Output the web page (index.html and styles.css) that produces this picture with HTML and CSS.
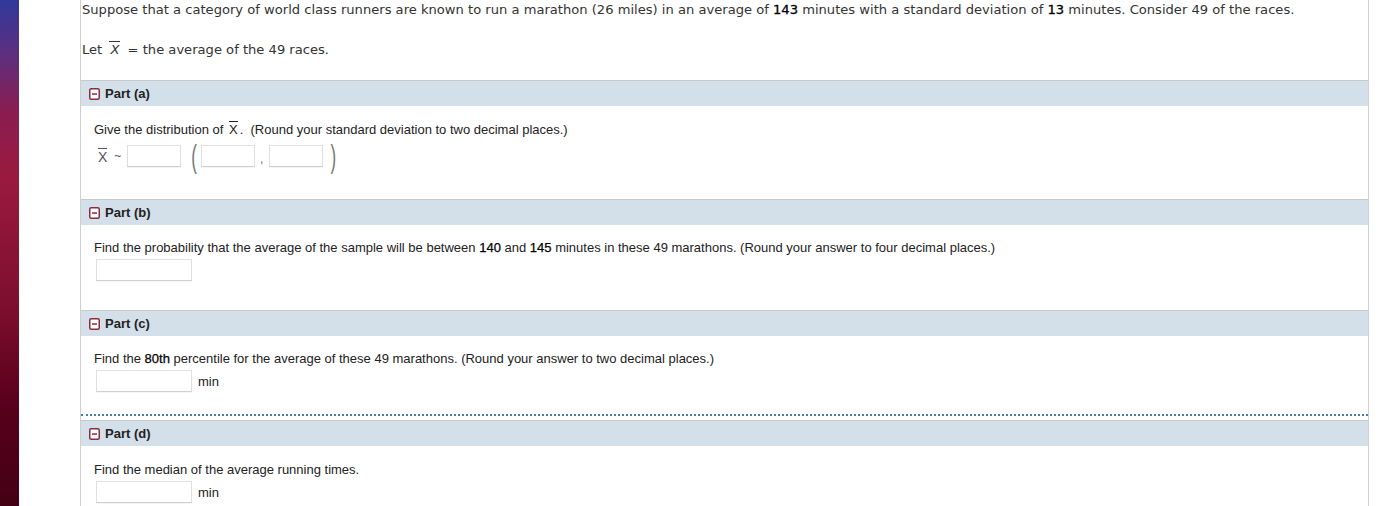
FILE: index.html
```html
<!DOCTYPE html>
<html>
<head>
<meta charset="utf-8">
<link rel="stylesheet" href="styles.css">
</head>
<body>
<div class="page">
  <div class="sidebar"></div>
  <div class="box">
    <div class="intro">
      <p class="q">Suppose that a category of world class runners are known to run a marathon (26 miles) in an average of <b>143</b> minutes with a standard deviation of <b>13</b> minutes. Consider 49 of the races.</p>
      <p class="q let">Let <span class="xbar it">X</span> = the average of the 49 races.</p>
    </div>

    <div class="part">
      <div class="phead"><svg class="tog" width="11" height="12" viewBox="0 0 11 12"><rect x="0.75" y="0.75" width="9.5" height="10.5" rx="1.5" fill="#fff" stroke="#8c2b3d" stroke-width="1.5"/><rect x="3" y="5.3" width="5" height="1.5" fill="#8c2b3d"/></svg><span>Part (a)</span></div>
      <div class="pbody first">
        <p class="txt">Give the distribution of <span class="xbar">X</span>.&nbsp; (Round your standard deviation to two decimal places.)</p>
        <div class="dist">
          <span class="xbar xl">X</span><span class="tilde">~</span>
          <span class="inp sm i1"></span>
          <span class="paren">(</span>
          <span class="inp sm"></span>
          <span class="comma">,</span>
          <span class="inp sm"></span>
          <span class="paren rp">)</span>
        </div>
      </div>
    </div>

    <div class="part">
      <div class="phead"><svg class="tog" width="11" height="12" viewBox="0 0 11 12"><rect x="0.75" y="0.75" width="9.5" height="10.5" rx="1.5" fill="#fff" stroke="#8c2b3d" stroke-width="1.5"/><rect x="3" y="5.3" width="5" height="1.5" fill="#8c2b3d"/></svg><span>Part (b)</span></div>
      <div class="pbody">
        <p class="txt">Find the probability that the average of the sample will be between <b>140</b> and <b>145</b> minutes in these 49 marathons. (Round your answer to four decimal places.)</p>
        <div class="ans"><span class="inp"></span></div>
      </div>
    </div>

    <div class="part">
      <div class="phead"><svg class="tog" width="11" height="12" viewBox="0 0 11 12"><rect x="0.75" y="0.75" width="9.5" height="10.5" rx="1.5" fill="#fff" stroke="#8c2b3d" stroke-width="1.5"/><rect x="3" y="5.3" width="5" height="1.5" fill="#8c2b3d"/></svg><span>Part (c)</span></div>
      <div class="pbody short">
        <p class="txt">Find the <b>80th</b> percentile for the average of these 49 marathons. (Round your answer to two decimal places.)</p>
        <div class="ans"><span class="inp"></span><span class="unit">min</span></div>
      </div>
      <div class="pagebreak"></div>
    </div>

    <div class="part">
      <div class="phead"><svg class="tog" width="11" height="12" viewBox="0 0 11 12"><rect x="0.75" y="0.75" width="9.5" height="10.5" rx="1.5" fill="#fff" stroke="#8c2b3d" stroke-width="1.5"/><rect x="3" y="5.3" width="5" height="1.5" fill="#8c2b3d"/></svg><span>Part (d)</span></div>
      <div class="pbody last">
        <p class="txt">Find the median of the average running times.</p>
        <div class="ans"><span class="inp"></span><span class="unit">min</span></div>
      </div>
    </div>
  </div>
</div>
</body>
</html>
```

FILE: styles.css
```css
html, body {
  margin: 0;
  padding: 0;
  background: #fff;
  height: 100%;
  overflow: hidden;
}

.page {
  display: flex;
  height: 506px;
}

.sidebar {
  width: 19px;
  flex: none;
  background: linear-gradient(to bottom, #30399a 0%, #5a2f82 10%, #8a1d50 22%, #9a1a3e 35%, #7e0f2e 60%, #58001d 80%, #440014 100%);
}

.box {
  margin-left: 61px;
  width: 1287px;
  border-left: 1px solid #cfcfcf;
  border-right: 1px solid #cfcfcf;
  flex: none;
}

.intro {
  padding: 0 0 0 1px;
  height: 80px;
}

.q {
  margin: 0;
  font-family: "DejaVu Sans", Verdana, sans-serif;
  font-size: 13.1px;
  line-height: 20px;
  color: #333;
  white-space: nowrap;
}

.q b {
  font-weight: normal;
  color: #000;
  -webkit-text-stroke: 0.3px #000;
}

.q.let {
  margin-top: 20px;
}

.xbar {
  display: inline-block;
  border-top: 1px solid currentColor;
  line-height: 1;
  padding-top: 1px;
  margin: 0 2px;
}

.let .xbar {
  margin: 0 3px 0 3px;
  padding: 1px 1px 0;
}

.it {
  font-style: italic;
}

.part {
  font-family: "Liberation Sans", Arial, sans-serif;
  font-size: 13px;
  color: #222;
}

.phead {
  display: flex;
  align-items: center;
  gap: 5px;
  height: 25px;
  border-top: 1px solid #c9c9c9;
  background: #d3dfe9;
  padding-left: 8px;
  font-weight: bold;
  color: #222;
}

.tog {
  flex: none;
}

.pbody {
  padding: 15px 13px 29px;
}

.pbody.first {
  padding-bottom: 28px;
}

.pbody.short {
  padding-bottom: 22px;
}

.pbody.last {
  padding-top: 16px;
}

.txt {
  margin: 0 0 3px;
  line-height: 16px;
}

.txt b {
  font-weight: normal;
  color: #000;
  -webkit-text-stroke: 0.25px #000;
}

.dist {
  display: flex;
  align-items: center;
  height: 30px;
  padding-left: 4px;
  color: #555;
}

.xl {
  font-size: 14px;
  margin: 0;
}

.tilde {
  margin-left: 7px;
  font-size: 12px;
}

.inp {
  display: inline-block;
  box-sizing: border-box;
  width: 96px;
  height: 22px;
  border: 1px solid #e0e0e0;
  border-bottom-color: #cfcfcf;
  background: #fff;
  box-shadow: 0 1px 1px rgba(0,0,0,0.04);
  flex: none;
}

.inp.sm {
  width: 54px;
}

.i1 {
  margin-left: 6px;
}

.paren {
  display: inline-block;
  font-size: 17px;
  line-height: 17px;
  color: #777;
  transform: scaleY(1.85);
  margin: 0 4px 0 10px;
}

.paren.rp {
  margin: 0 0 0 7px;
}

.comma {
  margin: 0 6px 0 5px;
  font-size: 12px;
  color: #666;
  position: relative;
  top: 3px;
}

.ans {
  display: flex;
  align-items: center;
  padding-left: 2px;
}

.unit {
  margin-left: 6px;
  color: #222;
}

.pagebreak {
  border-top: 2px dotted #4a78b1;
  height: 4px;
}
```
